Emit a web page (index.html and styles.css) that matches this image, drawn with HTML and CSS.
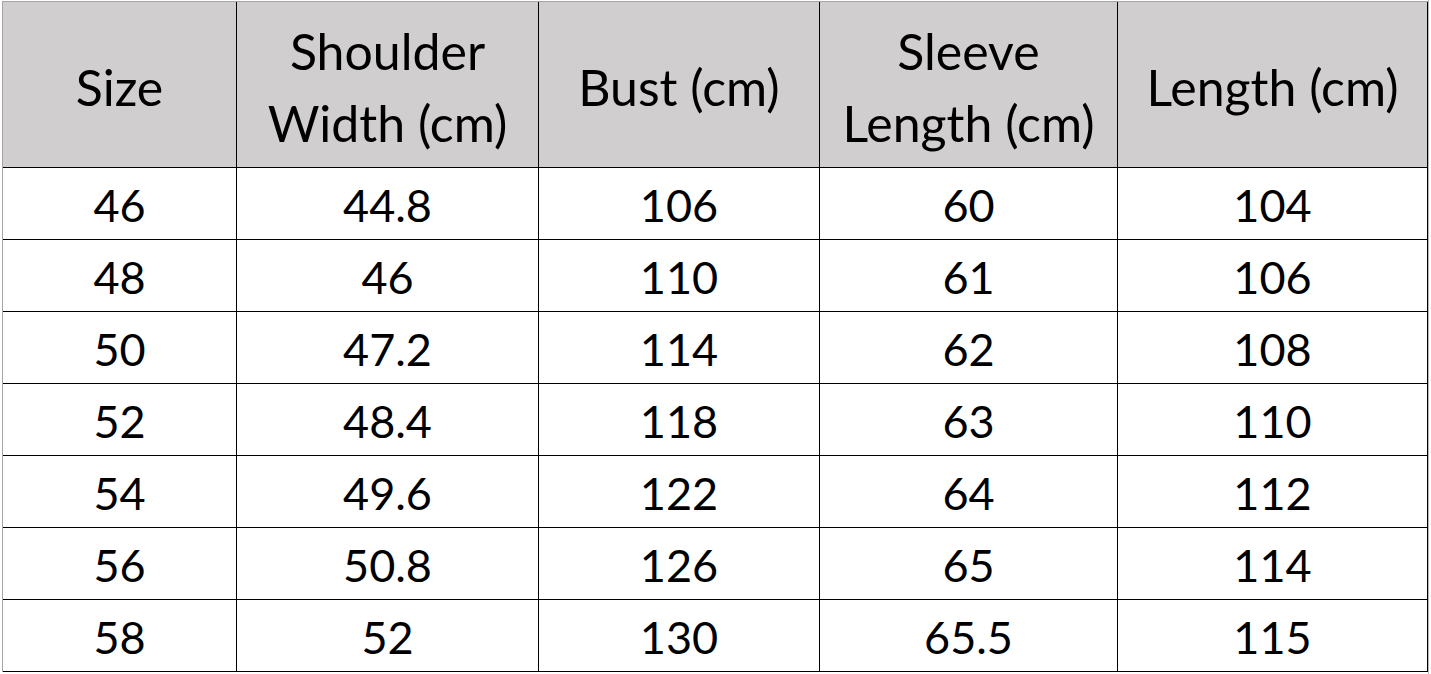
FILE: index.html
```html
<!DOCTYPE html>
<html>
<head>
<meta charset="utf-8">
<link rel="stylesheet" href="styles.css">
</head>
<body>
<div class="sheet">
  <div class="grid">
    <div class="cell head">Size</div>
    <div class="cell head">Shoulder<br>Width (cm)</div>
    <div class="cell head">Bust (cm)</div>
    <div class="cell head">Sleeve<br>Length (cm)</div>
    <div class="cell head">Length (cm)</div>

    <div class="cell">46</div><div class="cell">44.8</div><div class="cell">106</div><div class="cell">60</div><div class="cell">104</div>
    <div class="cell">48</div><div class="cell">46</div><div class="cell">110</div><div class="cell">61</div><div class="cell">106</div>
    <div class="cell">50</div><div class="cell">47.2</div><div class="cell">114</div><div class="cell">62</div><div class="cell">108</div>
    <div class="cell">52</div><div class="cell">48.4</div><div class="cell">118</div><div class="cell">63</div><div class="cell">110</div>
    <div class="cell">54</div><div class="cell">49.6</div><div class="cell">122</div><div class="cell">64</div><div class="cell">112</div>
    <div class="cell">56</div><div class="cell">50.8</div><div class="cell">126</div><div class="cell">65</div><div class="cell">114</div>
    <div class="cell">58</div><div class="cell">52</div><div class="cell">130</div><div class="cell">65.5</div><div class="cell">115</div>
  </div>
</div>
</body>
</html>
```

FILE: styles.css
```css
html, body {
  margin: 0;
  padding: 0;
  background: #ffffff;
}

.sheet {
  padding-top: 1px;
  padding-left: 2px;
  width: 1429px;
  height: 674px;
  box-sizing: border-box;
  border-right: 1px solid #b8b8b8;
}

.grid {
  display: grid;
  grid-template-columns: 233px 301px 280px 297px 309px;
  grid-template-rows: 165px repeat(7, 71px);
  gap: 1px;
  background: #000000;
  border-top: 1px solid #a6a6a6;
  border-left: 1px solid #a6a6a6;
  padding-right: 1px;
  padding-bottom: 1px;
  width: max-content;
}

.cell {
  background: #ffffff;
  display: flex;
  align-items: center;
  justify-content: center;
  text-align: center;
  font-family: Lato, "Open Sans", sans-serif;
  font-size: 45px;
  color: #000000;
  line-height: 1;
  padding-top: 3px;
  box-sizing: border-box;
}

.head {
  background: #d0cece;
  font-size: 50px;
  line-height: 72px;
  padding-top: 4px;
}
```
